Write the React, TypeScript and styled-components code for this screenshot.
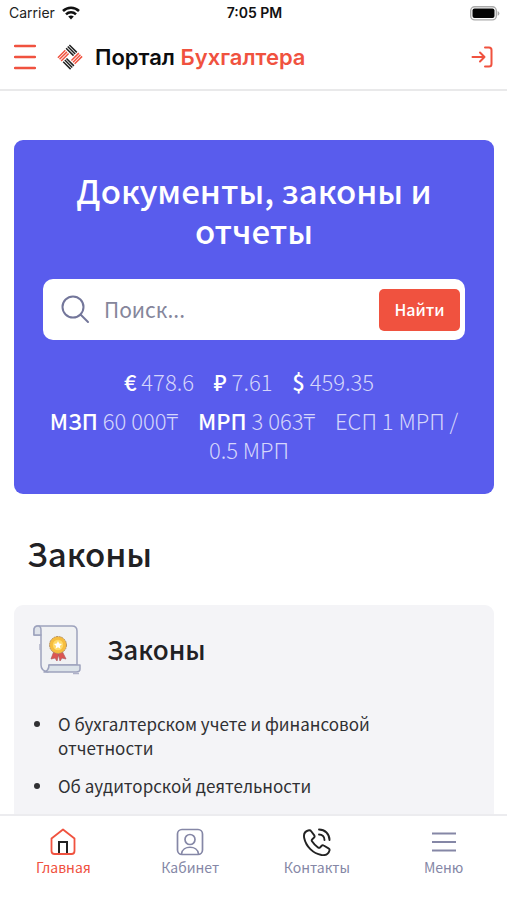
import React from "react";
import styled, { createGlobalStyle } from "styled-components";

const accent = "#f0523f";
const muted = "#8587a6";
const sans = `"Noto Sans CJK SC", "Noto Sans", sans-serif`;
const system = `Inter, "Liberation Sans", sans-serif`;

const GlobalStyle = createGlobalStyle`
  *, *::before, *::after { box-sizing: border-box; }
  body { margin: 0; background: #fff; color: #212124; font-family: ${sans}; }
  button, input { font: inherit; }
  h1, h2, h3, p, ul { margin: 0; padding: 0; }
  svg { display: block; flex: none; }
`;

const Screen = styled.div`
  display: flex;
  flex-direction: column;
  height: 100vh;
  overflow: hidden;
`;

const StatusBar = styled.div`
  display: grid;
  grid-template-columns: 1fr auto 1fr;
  align-items: center;
  height: 26px;
  padding: 0 7px 0 9px;
  font: 400 14px/18px ${system};
  color: #222;
  flex: none;
`;

const Carrier = styled.span`
  display: flex;
  align-items: center;
  gap: 7px;
`;

const Clock = styled.time`
  font-weight: 600;
  color: #111;
`;

const BatteryBox = styled.span`
  justify-self: end;
`;

const Header = styled.header`
  display: flex;
  align-items: center;
  height: 65px;
  padding: 0 14px 1px;
  border-bottom: 2px solid #e9e9ea;
  flex: none;
`;

const IconButton = styled.button`
  padding: 0;
  border: 0;
  background: none;
  color: ${accent};
  cursor: pointer;
`;

const Brand = styled.a`
  display: flex;
  align-items: center;
  gap: 12px;
  margin: 0 auto 0 21px;
  font: 600 22px/28px ${system};
  color: #0c0c0e;
  text-decoration: none;
`;

const BrandAccent = styled.span`
  color: ${accent};
`;

const Content = styled.main`
  flex: 1;
  min-height: 0;
  overflow: hidden;
  padding: 49px 13px 0 14px;
`;

const Hero = styled.section`
  padding: 30px 29px;
  border-radius: 9px;
  background: #595ced;
  color: #fff;
  text-align: center;
`;

const HeroTitle = styled.h1`
  font-size: 33px;
  line-height: 40px;
  font-weight: 500;
`;

const SearchForm = styled.form`
  display: flex;
  align-items: center;
  height: 61px;
  margin: 29px 0 27px;
  padding: 0 5px 0 18px;
  border-radius: 10px;
  background: #fff;
  color: #73769a;
`;

const SearchInput = styled.input`
  flex: 1;
  min-width: 0;
  margin-left: 14px;
  padding: 0 0 2px;
  border: 0;
  outline: 0;
  background: none;
  font-size: 21px;
  line-height: 30px;
  color: #303036;
  &::placeholder { color: #85869b; opacity: 1; }
`;

const SearchButton = styled.button`
  width: 81px;
  height: 42px;
  padding: 0 0 2px;
  border: 0;
  border-radius: 5px;
  background: ${accent};
  color: #fff;
  font-size: 16px;
  font-weight: 500;
  line-height: 24px;
  cursor: pointer;
`;

const Rates = styled.p`
  font-size: 22px;
  line-height: 29px;
  font-weight: 300;
  color: #d5d6fb;
  & + & { margin-top: 10px; }
`;

const Rate = styled.span`
  margin-right: 10px;
  & + & { margin-left: 5px; }
`;

const RateName = styled.strong`
  font-weight: 500;
  color: #fff;
`;

const SectionTitle = styled.h2`
  margin: 39px 13px 32px;
  font-size: 33px;
  line-height: 40px;
  font-weight: 500;
`;

const Card = styled.article`
  padding: 20px 19px;
  border-radius: 9px;
  background: #f4f4f7;
`;

const CardHeader = styled.div`
  display: flex;
  align-items: center;
  gap: 25px;
`;

const CardTitle = styled.h3`
  padding-bottom: 2px;
  font-size: 26px;
  line-height: 36px;
  font-weight: 500;
`;

const LawList = styled.ul`
  margin-top: 37px;
  list-style: none;
`;

const LawItem = styled.li`
  display: flex;
  gap: 18px;
  margin-bottom: 14px;
  font-size: 17px;
  line-height: 24px;
  color: #303033;
  &::before {
    content: "";
    flex: none;
    width: 6px;
    height: 6px;
    margin: 9px 0 0 1px;
    border-radius: 50%;
    background: #303033;
  }
`;

const LawLink = styled.a`
  max-width: 350px;
  color: inherit;
  text-decoration: none;
`;

const TabBar = styled.nav`
  display: grid;
  grid-template-columns: repeat(4, 1fr);
  height: 86px;
  padding-top: 12px;
  border-top: 2px solid #ececef;
  background: #fff;
  flex: none;
`;

const Tab = styled.a<{ $active?: boolean }>`
  display: flex;
  flex-direction: column;
  align-items: center;
  gap: 1px;
  font-size: 14px;
  line-height: 20px;
  color: ${(p) => (p.$active ? accent : muted)};
  text-decoration: none;
`;

const Wifi = () => (
  <svg width="18" height="14" viewBox="0 0 18 14" aria-hidden="true">
    <g fill="none" stroke="#111" strokeWidth="2.5">
      <path d="M1 5C5.5.5 12.5.5 17 5" />
      <path d="M4 8.300C6.800 5.500 11.200 5.500 14 8.300" />
    </g>
    <path d="M9 13.500 6.200 10.600Q9 8.300 11.800 10.600Z" fill="#111" />
  </svg>
);

const Battery = () => (
  <svg width="30" height="15" viewBox="0 0 30 15" aria-hidden="true">
    <rect x=".7" y=".7" width="25.600" height="13.200" rx="4" fill="#fff" stroke="#aaa" strokeWidth="1.400" />
    <rect x="2.500" y="2.500" width="22" height="9.600" rx="2" fill="#050505" />
    <path d="M27.600 5v4.800q1.800-.8 1.800-2.400T27.600 5" fill="#aaa" />
  </svg>
);

const Logo = () => (
  <svg width="26" height="26" viewBox="0 0 26 26" fill="none" strokeWidth="1.500" aria-hidden="true">
    <g transform="translate(13 .3) rotate(45)">
      <path d="M0 .9h10.500M0 3.200h10.500M0 5.500h10.500M7.500 12.500H18M7.500 14.800H18M7.500 17.100H18" stroke="#222" />
      <path d="M.9 7.500V18M3.200 7.500V18M5.500 7.500V18M12.500 0v10.500M14.800 0v10.500M17.100 0v10.500" stroke={accent} />
    </g>
  </svg>
);

const Burger = () => (
  <svg width="22" height="26" viewBox="0 0 22 26" aria-hidden="true">
    <path d="M1 2h20M1 13h20M1 24h20" stroke="currentColor" strokeWidth="2.300" strokeLinecap="round" />
  </svg>
);

const Login = () => (
  <svg width="22" height="22" viewBox="0 0 22 22" fill="none" stroke="currentColor" strokeWidth="2" strokeLinecap="round" strokeLinejoin="round" aria-hidden="true">
    <path d="M14 1.500h4q2.500 0 2.500 2.500v14q0 2.500-2.500 2.500h-4M1.500 11h12M9 6.500l4.500 4.500L9 15.500" />
  </svg>
);

const SearchIcon = () => (
  <svg width="29" height="29" viewBox="0 0 29 29" fill="none" stroke="currentColor" strokeWidth="2" strokeLinecap="round" aria-hidden="true">
    <circle cx="12" cy="12" r="10.500" />
    <path d="m19.500 19.500 7.500 7.500" />
  </svg>
);

const Scroll = () => (
  <svg width="49" height="50" viewBox="0 0 49 50" fill="none" strokeWidth="1.500" strokeLinejoin="round" aria-hidden="true">
    <path d="M5 1h34q5 0 5 5v34H16l-1 7q-7-1-7-7V10H1V5q0-4 4-4Z" fill="#f0f1f3" stroke="#9da2bd" />
    <path d="M1 10V5q0-4 4-4 3 0 3 4v5Z" fill="#dfe3ea" stroke="#9da2bd" />
    <path d="M16 40h31v4q0 3-4 3H11q5-1 5-7Z" fill="#dce3e9" stroke="#9da2bd" />
    <path d="M40 48.500h6M7 19v6" stroke="#aeb1c8" />
    <path d="m21 26-3 8 4-1 2 3 2-8M29 26l4 8-4-1-2 3-2-8" fill="#dd5551" stroke="#ad5960" strokeWidth=".7" />
    <circle cx="25" cy="20" r="8.500" fill="#f6bd3e" stroke="#b79160" strokeWidth="1" strokeDasharray="2 .7" />
    <circle cx="25" cy="20" r="5.200" fill="#ffda68" />
    <path d="m25 16 1.200 2.600 2.800.3-2.100 2 .6 2.800-2.500-1.400-2.500 1.400.6-2.800-2.100-2 2.800-.3Z" fill="#fff" />
  </svg>
);

const Home = () => (
  <svg width="28" height="28" viewBox="0 0 28 28" fill="none" strokeWidth="1.800" strokeLinejoin="round" aria-hidden="true">
    <path d="M10 26V14h8v12" stroke="#222" strokeWidth="2" strokeLinejoin="miter" />
    <path d="M2.500 10.500 14 1.500l11.500 9V23q0 3-3 3h-17q-3 0-3-3Z" stroke="currentColor" />
  </svg>
);

const Profile = () => (
  <svg width="28" height="28" viewBox="0 0 28 28" fill="none" stroke="currentColor" strokeWidth="1.700" aria-hidden="true">
    <rect x="1.500" y="1.500" width="25" height="25" rx="4.500" />
    <circle cx="14" cy="11.500" r="5" />
    <path d="M5.500 26c1-9 16-9 17 0" />
  </svg>
);

const Phone = () => (
  <svg width="28" height="28" viewBox="0 0 28 28" fill="none" stroke="#222" strokeWidth="1.900" strokeLinecap="round" strokeLinejoin="round" aria-hidden="true">
    <path d="M5 2.500C2 3.500.5 6.500 1.200 10 3 18.500 10 25.500 18.500 27c4 .6 7-1 8-4.500.3-1-.1-1.700-1-2.200L20.700 17.500c-.8-.5-1.700-.3-2.300.5l-1.200 1.300c-.7.7-1.400.7-2.200.1-2.500-1.800-4.500-3.700-6-6.100-.5-.8-.4-1.500.3-2.100l1.600-1.400c.8-.7.9-1.500.4-2.400L8.200 3.200C7.500 2.100 6.300 2 5 2.500Z" />
    <path d="M16 1.500c6 0 10.500 4.500 10.500 10.500M16 6.500c3.300 0 5.500 2.200 5.500 5.500" />
  </svg>
);

const MenuIcon = () => (
  <svg width="28" height="28" viewBox="0 0 28 28" aria-hidden="true">
    <path d="M2 5.500h24M2 14h24M2 22.500h24" stroke="currentColor" strokeWidth="2" />
  </svg>
);

const currencies = [
  ["€", "478.6"],
  ["₽", "7.61"],
  ["$", "459.35"],
];

const indices = [
  ["МЗП", "60 000₸"],
  ["МРП", "3 063₸"],
];

const laws = ["О бухгалтерском учете и финансовой отчетности", "Об аудиторской деятельности"];

const tabs = [
  { label: "Главная", Icon: Home, active: true },
  { label: "Кабинет", Icon: Profile },
  { label: "Контакты", Icon: Phone },
  { label: "Меню", Icon: MenuIcon },
];

export default function App() {
  return (
    <Screen>
      <GlobalStyle />
      <StatusBar>
        <Carrier>Carrier <Wifi /></Carrier>
        <Clock>7:05 PM</Clock>
        <BatteryBox><Battery /></BatteryBox>
      </StatusBar>
      <Header>
        <IconButton type="button" aria-label="Меню"><Burger /></IconButton>
        <Brand href="#">
          <Logo />
          <span>Портал <BrandAccent>Бухгалтера</BrandAccent></span>
        </Brand>
        <IconButton type="button" aria-label="Войти"><Login /></IconButton>
      </Header>
      <Content>
        <Hero>
          <HeroTitle>Документы, законы и отчеты</HeroTitle>
          <SearchForm role="search" onSubmit={(e) => e.preventDefault()}>
            <SearchIcon />
            <SearchInput type="text" placeholder="Поиск..." aria-label="Поиск" />
            <SearchButton type="submit">Найти</SearchButton>
          </SearchForm>
          <Rates>
            {currencies.map(([name, value]) => (
              <React.Fragment key={name}>
                <Rate><RateName>{name}</RateName> {value}</Rate>{" "}
              </React.Fragment>
            ))}
          </Rates>
          <Rates>
            {indices.map(([name, value]) => (
              <React.Fragment key={name}>
                <Rate><RateName>{name}</RateName> {value}</Rate>{" "}
              </React.Fragment>
            ))}
            <Rate>ЕСП 1 МРП / 0.5 МРП</Rate>
          </Rates>
        </Hero>
        <SectionTitle>Законы</SectionTitle>
        <Card>
          <CardHeader>
            <Scroll />
            <CardTitle>Законы</CardTitle>
          </CardHeader>
          <LawList>
            {laws.map((law) => (
              <LawItem key={law}><LawLink href="#">{law}</LawLink></LawItem>
            ))}
          </LawList>
        </Card>
      </Content>
      <TabBar>
        {tabs.map(({ label, Icon, active }) => (
          <Tab key={label} href="#" $active={active} aria-current={active ? "page" : undefined}>
            <Icon />
            {label}
          </Tab>
        ))}
      </TabBar>
    </Screen>
  );
}
